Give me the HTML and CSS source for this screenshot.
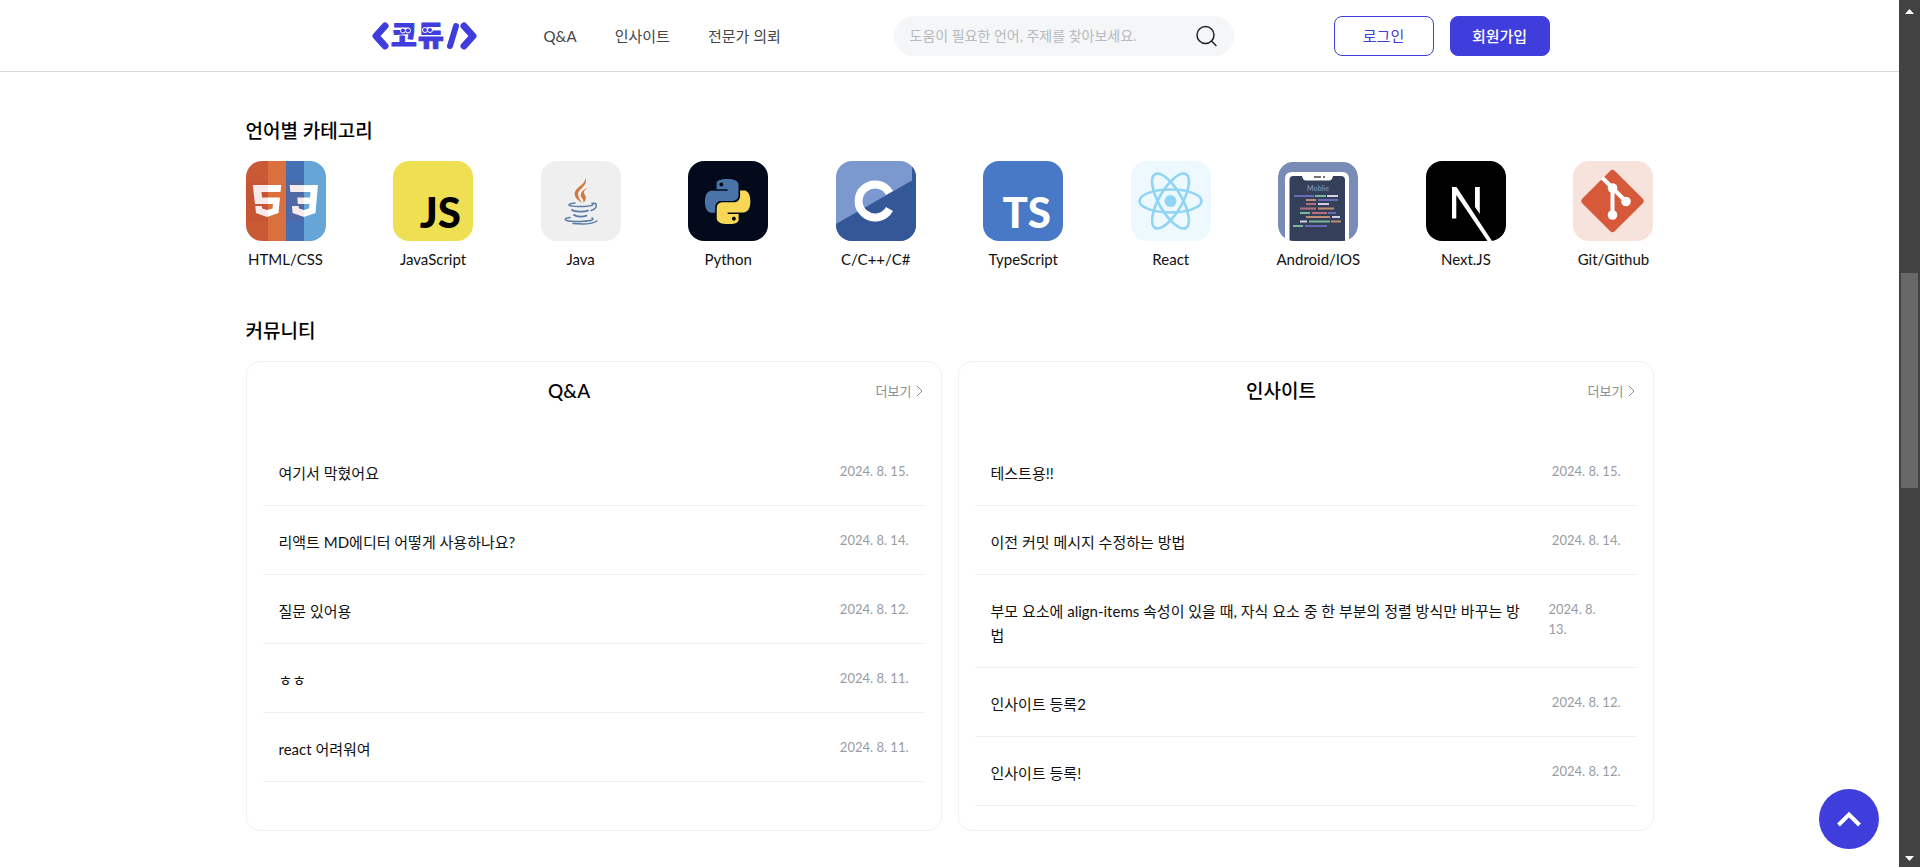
FILE: index.html
```html
<!DOCTYPE html>
<html lang="ko">
<head>
<meta charset="utf-8">
<title>코듀</title>
<link rel="stylesheet" href="styles.css">
</head>
<body>
<div class="page">
  <header class="header">
    <div class="header-inner">
      <a class="logo" href="#" aria-label="코듀">
        <svg width="106" height="50" viewBox="0 -10 106 50">
          <g fill="none" stroke="#3f3ddb" stroke-linecap="round" stroke-linejoin="round">
            <path stroke-width="7" d="M13 5 4 15l9 10M92 5l9 10-9 10"/>
            <path stroke-width="6" d="M84 5l-6 20"/>
          </g>
          <text class="logo-text" x="19 46" y="25">코듀</text>
          <g fill="#3f3ddb" stroke="#fff" stroke-width="1">
            <circle cx="31" cy="9.500" r="2.500"/><circle cx="36" cy="9.500" r="2.500"/>
            <circle cx="53" cy="9" r="2.500"/><circle cx="58" cy="9" r="2.500"/>
          </g>
        </svg>
      </a>
      <nav class="nav">
        <a href="#">Q&amp;A</a>
        <a href="#">인사이트</a>
        <a href="#">전문가 의뢰</a>
      </nav>
      <form class="search">
        <input type="text" aria-label="검색" placeholder="도움이 필요한 언어, 주제를 찾아보세요.">
        <button type="button" aria-label="찾기">
          <svg width="22" height="22" viewBox="0 0 22 22" fill="none" stroke="#222" stroke-width="1.500" stroke-linecap="round"><circle cx="9.500" cy="10" r="8.500"/><path d="M15.500 16l4.500 4.500"/></svg>
        </button>
      </form>
      <div class="auth">
        <button class="btn btn-line" type="button">로그인</button>
        <button class="btn btn-fill" type="button">회원가입</button>
      </div>
    </div>
  </header>

  <main class="content">
    <h2 class="section-title">언어별 카테고리</h2>
    <ul class="categories">
      <li><a href="#">
        <svg class="tile" viewBox="0 0 80 80"><path fill="#ca5936" d="M0 0h22v80H0z"/><path fill="#da703d" d="M22 0h18v80H22z"/><path fill="#4470b3" d="M40 0h18v80H40z"/><path fill="#66a5d8" d="M58 0h22v80H58z"/>
          <path fill="#fff" d="M6.700 24h28.600l-.8 7h-19l.5 5.500h18L32.500 52 21 56l-11-4-.7-7h6.500l.4 2.500 5.100 1.500 5.200-1.500.5-4.500H9zM43.700 24H72l-2.500 28L58 56l-11.500-4-.5-7h6.700l.3 2.500 5 1.500 5-1.500.5-4.500H51.800l-.5-6.500H64l.5-5.500H44.300z"/>
          <path fill="#a33" opacity=".1" d="M0 20h22v40H0zM40 20h18v40H40z"/></svg>
        <span>HTML/CSS</span></a></li>
      <li><a href="#">
        <svg class="tile" viewBox="0 0 80 80"><path fill="#efdf52" d="M0 0h80v80H0z"/><text class="tile-letters" x="68" y="67" fill="#000">JS</text></svg>
        <span>JavaScript</span></a></li>
      <li><a href="#">
        <svg class="tile" viewBox="0 0 80 80"><path fill="#efefef" d="M0 0h80v80H0z"/>
          <path fill="#d07a3f" d="M44.500 17c2 6-3 9-6 12.500-3 3.500-1 7 2.500 12.500-6-4-9.500-8-6-13 3-4 9-6 9.500-12zM49.500 26c-6 2-8 4.500-5.500 8 1.500 2.500 1 5-1.500 8 1-4-4-5.500-2.500-9.500 1.200-3.500 5.500-5.500 9.500-6.500z"/>
          <g fill="none" stroke="#5a7ba6" stroke-width="1.500" stroke-linecap="round"><path d="M34 42c-4 .5-6 1.200-6 2 0 2 20 2 24-.2M51 42.500c6-2 6 5-1 7"/><path stroke-width="1.800" d="M31 49c3 2 12 2 16 .6M33 54c3 2 9 2 12.500.6"/><path d="M29 56.500c-7 1-6 3 1 3.700 8 .8 18 0 21-1.200 1.500-.8 1-1.500 0-2M32 62.500c9 .8 20 .5 24-2.500"/></g></svg>
        <span>Java</span></a></li>
      <li><a href="#">
        <svg class="tile" viewBox="0 0 80 80"><path fill="#030a1b" d="M0 0h80v80H0z"/>
          <g transform="translate(17 18) scale(1.880)"><path fill="#4a74a8" d="M14.250.18l.9.2.73.26.59.3.45.32.34.34.25.34.16.33.1.3.04.26.02.2-.01.13V8.500l-.05.63-.13.55-.21.46-.26.38-.3.31-.33.25-.35.19-.35.14-.33.1-.3.07-.26.04-.21.02H8.770l-.69.05-.59.14-.5.22-.41.27-.33.32-.27.35-.2.36-.15.37-.1.35-.07.32-.04.27-.02.21v3.060H3.170l-.21-.03-.28-.07-.32-.12-.35-.18-.36-.26-.36-.36-.35-.46-.32-.59-.28-.73-.21-.88-.14-1.050-.05-1.230.06-1.220.16-1.040.24-.87.32-.71.36-.57.4-.44.42-.33.42-.24.4-.16.36-.1.32-.05.24-.01h.16l.06.01h8.160v-.83H6.180l-.01-2.750-.02-.37.05-.34.11-.31.17-.28.25-.26.31-.23.38-.2.44-.18.51-.15.58-.12.64-.1.71-.06.77-.04.84-.02 1.270.05zm-6.300 1.980l-.23.33-.08.41.08.41.23.34.33.22.41.09.41-.09.33-.22.23-.34.08-.41-.08-.41-.23-.33-.33-.22-.41-.09-.41.09z"/>
          <path fill="#f7d755" d="M21.100 6.110l.28.06.32.12.35.18.36.27.36.35.35.47.32.59.28.73.21.88.14 1.040.05 1.230-.06 1.230-.16 1.040-.24.86-.32.71-.36.57-.4.45-.42.33-.42.24-.4.16-.36.09-.32.05-.24.02-.16-.01h-8.220v.82h5.840l.01 2.760.02.36-.05.34-.11.31-.17.29-.25.25-.31.24-.38.2-.44.17-.51.15-.58.13-.64.09-.71.07-.77.04-.84.01-1.270-.04-1.070-.14-.9-.2-.73-.25-.59-.3-.45-.33-.34-.34-.25-.34-.16-.33-.1-.3-.04-.25-.02-.2.01-.13v-5.340l.05-.64.13-.54.21-.46.26-.38.3-.32.33-.24.35-.2.35-.14.33-.1.3-.06.26-.04.21-.02.13-.01h5.840l.69-.05.59-.14.5-.21.41-.28.33-.32.27-.35.2-.36.15-.36.1-.35.07-.32.04-.28.02-.21V6.070h2.090l.14.01zm-6.470 14.250l-.23.33-.08.41.08.41.23.33.33.23.41.08.41-.08.33-.23.23-.33.08-.41-.08-.41-.23-.33-.33-.23-.41-.08-.41.08z"/></g></svg>
        <span>Python</span></a></li>
      <li><a href="#">
        <svg class="tile" viewBox="0 0 80 80"><path fill="#7c99cf" d="M0 0h80v80H0z"/><path fill="#345798" d="M0 63l76-43.500V5l4-3v78H0z"/><path fill="none" stroke="#fff" stroke-width="8" d="M53.500 32a16.500 16.500 0 1 0 0 16"/></svg>
        <span>C/C++/C#</span></a></li>
      <li><a href="#">
        <svg class="tile" viewBox="0 0 80 80"><path fill="#4879c6" d="M0 0h80v80H0z"/><text class="tile-letters" x="68" y="67" fill="#fff">TS</text></svg>
        <span>TypeScript</span></a></li>
      <li><a href="#">
        <svg class="tile" viewBox="0 0 80 80"><path fill="#edf9fe" d="M0 0h80v80H0z"/>
          <g fill="none" stroke="#90d5f5" stroke-width="2.600"><ellipse cx="39.500" cy="40" rx="31" ry="11.500"/><ellipse cx="39.500" cy="40" rx="31" ry="11.500" transform="rotate(60 39.500 40)"/><ellipse cx="39.500" cy="40" rx="31" ry="11.500" transform="rotate(120 39.500 40)"/></g><circle cx="39.500" cy="40" r="6" fill="#90d5f5"/></svg>
        <span>React</span></a></li>
      <li><a href="#">
        <svg class="tile" viewBox="0 0 80 80"><rect y="1" width="80" height="79" rx="15" fill="#788cb6"/><path fill="#fff" d="M7 80V18q0-7 7-7h50q7 0 7 7v62z"/><path fill="#344059" d="M11.500 80V19q0-4 4-4h8.500q1 4.500 4 4.500h23q3 0 4-4.500h8q4 0 4 4v61z"/><path stroke="#444" stroke-width="1.500" d="M36 16h7M45 16h2"/>
          <text class="phone-label" x="40" y="29.500">Moblie</text>
          <g fill="none" stroke-width="1.800"><path stroke="#6a6bb5" d="M16 35h20M40 39h20M50 52h8M27 65h22"/><path stroke="#79b79b" d="M37 35h11M22 52h10M31 60.500h21M15 65h10"/><path stroke="#d5cfe6" d="M49 35h11M40 43h11M54 56h8M22 60.500h7"/><path stroke="#c08d72" d="M28 39h10M40 47.500h16M28 56h24M53 60.500h10"/><path stroke="#b56e7d" d="M28 43h10M22 47.500h16M34 52h15"/></g></svg>
        <span>Android/IOS</span></a></li>
      <li><a href="#">
        <svg class="tile" viewBox="0 0 80 80"><path d="M0 0h80v80H0z"/><path fill="#fff" d="M26 26h4.500L66 80h-4.500L30.300 34v23.500H26zM49 26h4.800v27L49 46z"/></svg>
        <span>Next.JS</span></a></li>
      <li><a href="#">
        <svg class="tile" viewBox="0 0 80 80"><path fill="#f8e3dc" d="M0 0h80v80H0z"/><rect x="16.500" y="17" width="46" height="46" rx="3.500" fill="#d65a3a" transform="rotate(45 39.500 40)"/><path fill="none" stroke="#fff" stroke-width="4" d="M29 16.500l24 24M39.500 27v27"/><g fill="#fff"><circle cx="39.500" cy="27" r="4.800"/><circle cx="39.500" cy="54" r="4.800"/><circle cx="53" cy="40.500" r="4.800"/></g></svg>
        <span>Git/Github</span></a></li>
    </ul>

    <h2 class="section-title">커뮤니티</h2>
    <div class="boards">
      <section class="board">
        <div class="board-head"><h3>Q&amp;A</h3><a class="more" href="#">더보기<svg width="7" height="12" viewBox="0 0 7 12" fill="none" stroke="#868e96"><path d="M1 1l5 5-5 5"/></svg></a></div>
        <ul class="posts">
          <li><a href="#">여기서 막혔어요</a><time>2024. 8. 15.</time></li>
          <li><a href="#">리액트 MD에디터 어떻게 사용하나요?</a><time>2024. 8. 14.</time></li>
          <li><a href="#">질문 있어용</a><time>2024. 8. 12.</time></li>
          <li><a href="#">ㅎㅎ</a><time>2024. 8. 11.</time></li>
          <li><a href="#">react 어려워여</a><time>2024. 8. 11.</time></li>
        </ul>
      </section>
      <section class="board">
        <div class="board-head"><h3>인사이트</h3><a class="more" href="#">더보기<svg width="7" height="12" viewBox="0 0 7 12" fill="none" stroke="#868e96"><path d="M1 1l5 5-5 5"/></svg></a></div>
        <ul class="posts">
          <li><a href="#">테스트용!!</a><time>2024. 8. 15.</time></li>
          <li><a href="#">이전 커밋 메시지 수정하는 방법</a><time>2024. 8. 14.</time></li>
          <li><a href="#">부모 요소에 align-items 속성이 있을 때, 자식 요소 중 한 부분의 정렬 방식만 바꾸는 방법</a><time class="two-line">2024. 8.<br>13.</time></li>
          <li><a href="#">인사이트 등록2</a><time>2024. 8. 12.</time></li>
          <li><a href="#">인사이트 등록!</a><time>2024. 8. 12.</time></li>
        </ul>
      </section>
    </div>
  </main>
  <button class="to-top" type="button" aria-label="맨 위로"><svg width="26" height="18" viewBox="0 0 26 18" fill="none" stroke="#fff" stroke-width="4"><path d="M2.500 15 13 4.500 23.500 15"/></svg></button>
</div>
<div class="scrollbar" aria-hidden="true">
  <svg width="9" height="5" viewBox="0 0 9 5"><path fill="#fff" d="M0 5 4.500 0 9 5z"/></svg>
  <div class="track"><div class="thumb"></div></div>
  <svg width="9" height="5" viewBox="0 0 9 5"><path fill="#fff" d="M0 0h9L4.500 5z"/></svg>
</div>
</body>
</html>
```
FILE: styles.css
```css
* { box-sizing: border-box; }
body {
  margin: 0;
  display: flex;
  min-height: 100vh;
  background: #fff;
  color: #111;
  font-family: Lato, "Noto Sans CJK KR", sans-serif;
  font-size: 15px;
  font-weight: 400;
  line-height: 24px;
}
a { color: inherit; text-decoration: none; }
ul { list-style: none; margin: 0; padding: 0; }
button, input { font: inherit; }
.page { flex: 1; min-width: 0; }

.header { border-bottom: 1px solid #d9d9d9; }
.header-inner {
  display: flex;
  align-items: center;
  max-width: 1200px;
  height: 71px;
  margin: 0 auto;
}
.logo { display: flex; margin-left: 22px; }
.logo-text {
  font-family: "Noto Sans CJK KR", sans-serif;
  font-size: 28px;
  font-weight: 900;
  fill: #3f3ddb;
  stroke: #3f3ddb;
  stroke-width: 1px;
  stroke-linejoin: round;
}
.nav { display: flex; gap: 38px; margin-left: 66px; color: #444; }
.search {
  display: flex;
  align-items: center;
  width: 340px;
  height: 40px;
  margin-left: auto;
  padding: 0 16px;
  border-radius: 20px;
  background: #f4f6f8;
}
.search input {
  flex: 1;
  min-width: 0;
  padding: 0;
  border: 0;
  outline: 0;
  background: none;
  font-size: 14px;
}
.search input::placeholder { color: #b4bac0; opacity: 1; }
.search button { display: flex; padding: 0; border: 0; background: none; }
.auth { display: flex; gap: 16px; margin-left: 100px; }
.btn {
  width: 100px;
  height: 40px;
  padding: 0;
  border: 1px solid #3f3ddb;
  border-radius: 8px;
}
.btn-line { background: #fff; color: #3f3ddb; }
.btn-fill { background: #3f3ddb; color: #fff; font-weight: 500; }

.content { max-width: 1440px; margin: 0 auto; padding: 47px 16px 35px; }
.section-title { margin: 0 0 18px; color: #000; font-size: 19px; font-weight: 500; line-height: 24px; }
.categories { display: flex; justify-content: space-between; margin-bottom: 48px; }
.categories li { width: 80px; }
.categories a { display: flex; flex-direction: column; align-items: center; gap: 6px; white-space: nowrap; }
.tile { width: 80px; height: 80px; border-radius: 16px; }
.tile-letters { font-family: Lato, sans-serif; font-size: 42px; font-weight: 900; text-anchor: end; }
.phone-label { font-family: Lato, sans-serif; font-size: 7px; font-weight: 700; text-anchor: middle; fill: #788cb6; }

.boards { display: grid; grid-template-columns: 1fr 1fr; gap: 16px; }
.board { padding: 15px 16px 24px; border: 1px solid #f1f1f3; border-radius: 14px; }
.board-head { display: flex; align-items: center; height: 28px; margin-bottom: 32px; }
.board-head h3 { flex: 1; margin: 0; color: #000; font-size: 19px; font-weight: 500; text-align: center; }
.more { display: flex; align-items: center; gap: 4px; padding-right: 2px; color: #868e96; font-size: 13px; }
.posts li { display: flex; justify-content: space-between; gap: 16px; padding: 24px 16px 20px; border-bottom: 1px solid #f1f1f3; }
.posts a { word-break: break-all; }
.posts time { flex: none; color: #999ba3; font-size: 13px; line-height: 20px; }
.posts .two-line { min-width: 72px; }

.to-top {
  position: fixed;
  right: 41px;
  bottom: 18px;
  display: flex;
  align-items: center;
  justify-content: center;
  width: 60px;
  height: 60px;
  padding: 0;
  border: 0;
  border-radius: 50%;
  background: #3f3ddb;
}

.scrollbar {
  position: sticky;
  top: 0;
  display: flex;
  flex-direction: column;
  align-items: center;
  width: 21px;
  height: 100vh;
  padding: 9px 2px 6px;
  background: #424242;
}
.track { flex: 1; width: 17px; display: grid; grid-template-rows: 259fr 215fr 368fr; }
.thumb { grid-row: 2; background: #686868; }
```
